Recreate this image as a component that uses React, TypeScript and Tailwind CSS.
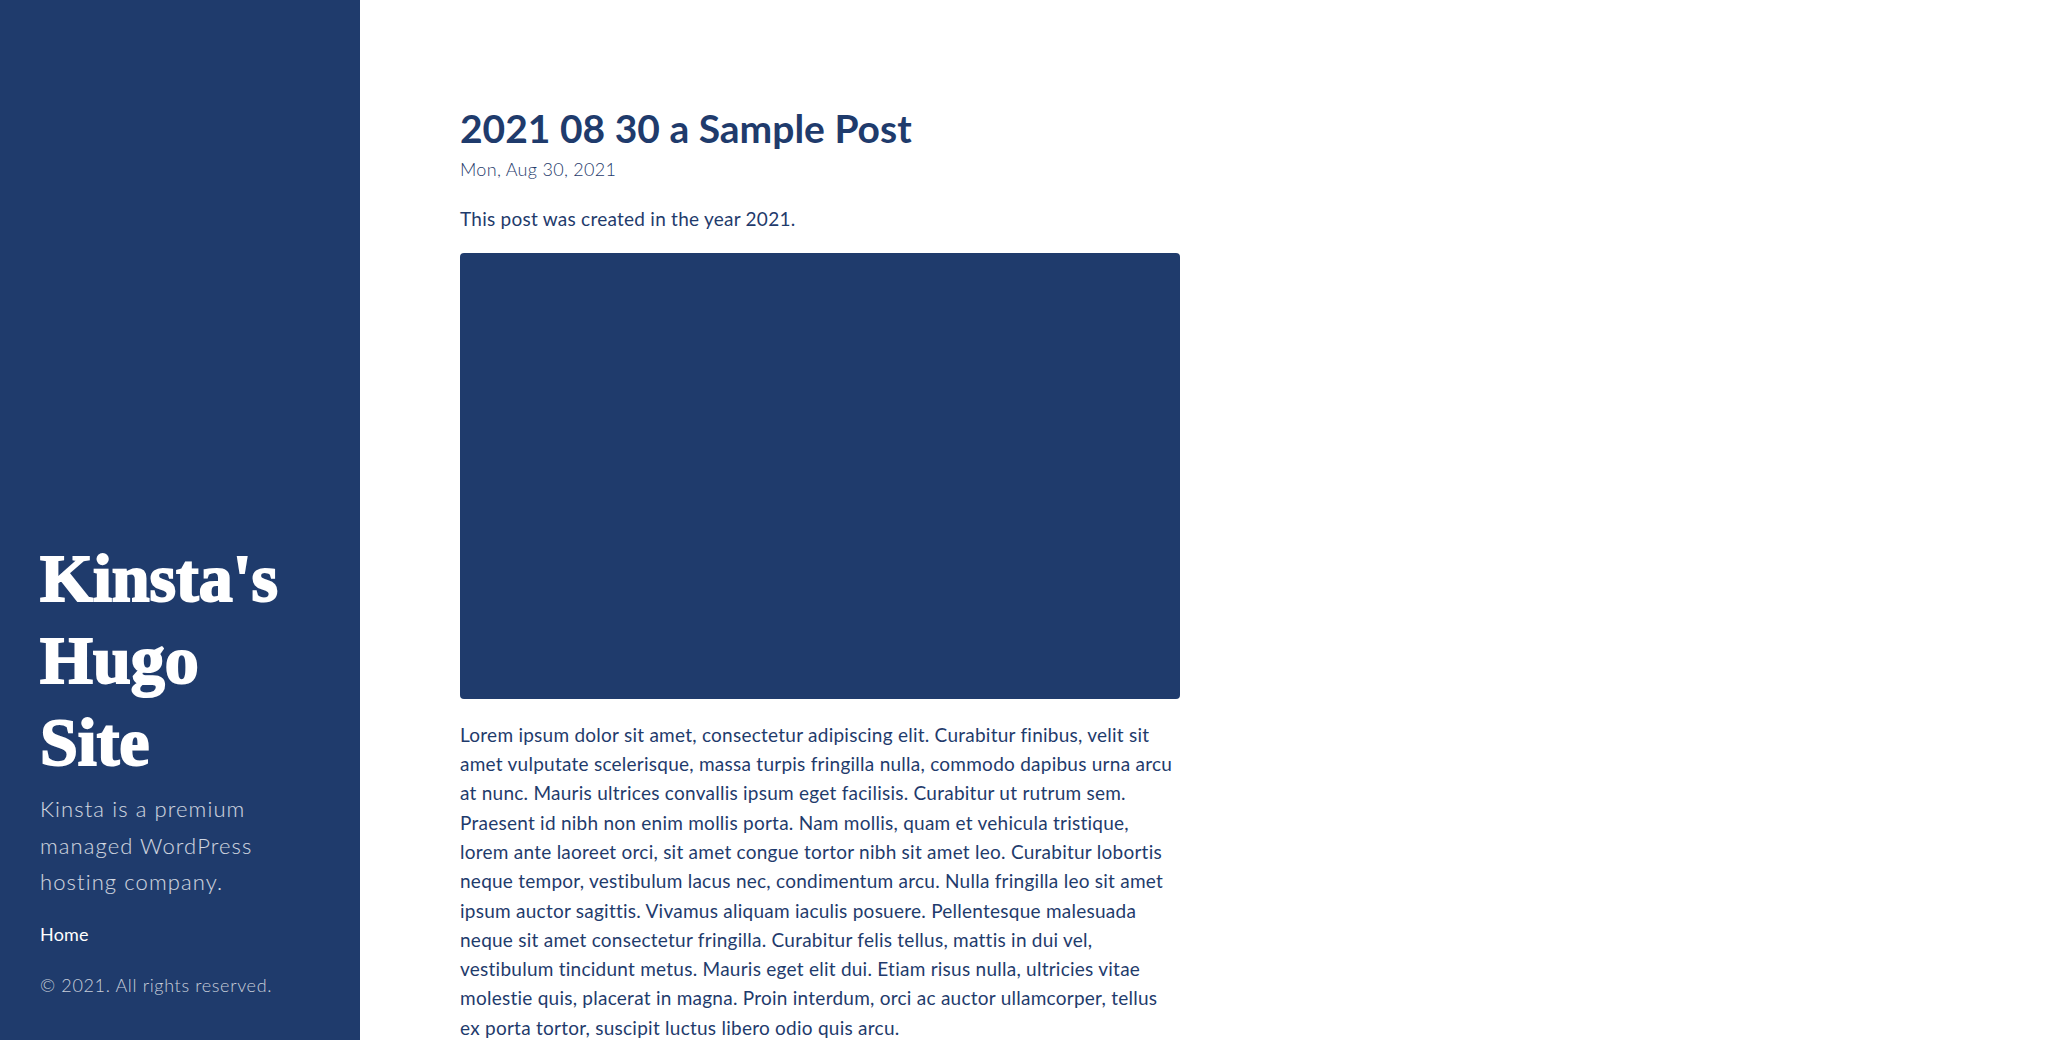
import React from "react";

const bodyLines = [
  "Lorem ipsum dolor sit amet, consectetur adipiscing elit. Curabitur finibus, velit sit",
  "amet vulputate scelerisque, massa turpis fringilla nulla, commodo dapibus urna arcu",
  "at nunc. Mauris ultrices convallis ipsum eget facilisis. Curabitur ut rutrum sem.",
  "Praesent id nibh non enim mollis porta. Nam mollis, quam et vehicula tristique,",
  "lorem ante laoreet orci, sit amet congue tortor nibh sit amet leo. Curabitur lobortis",
  "neque tempor, vestibulum lacus nec, condimentum arcu. Nulla fringilla leo sit amet",
  "ipsum auctor sagittis. Vivamus aliquam iaculis posuere. Pellentesque malesuada",
  "neque sit amet consectetur fringilla. Curabitur felis tellus, mattis in dui vel,",
  "vestibulum tincidunt metus. Mauris eget elit dui. Etiam risus nulla, ultricies vitae",
  "molestie quis, placerat in magna. Proin interdum, orci ac auctor ullamcorper, tellus",
  "ex porta tortor, suscipit luctus libero odio quis arcu.",
];

export default function App() {
  return (
    <div className="flex min-h-screen bg-white font-['Lato',sans-serif]">
      <aside className="sticky top-0 flex h-screen w-[360px] shrink-0 flex-col justify-end bg-[#1f3b6c] pl-[40px] pr-6 pb-[43px]">
        <h1 className="font-['Liberation_Serif','Times_New_Roman',serif] text-[68px] font-bold leading-[82px] text-white [-webkit-text-stroke:2px_white]">
          Kinsta's
          <br />
          Hugo
          <br />
          Site
        </h1>
        <p className="mt-[7.5px] text-[22px] font-light leading-[36.7px] tracking-[1.1px] text-white/80">
          Kinsta is a premium
          <br />
          managed WordPress
          <br />
          hosting company.
        </p>
        <nav className="mt-[21px]">
          <a href="#" className="text-[18px] leading-[24px] tracking-[0.2px] text-white">
            Home
          </a>
        </nav>
        <p className="mt-[26px] text-[18px] font-light leading-[24px] tracking-[0.65px] text-white/75">
          © 2021. All rights reserved.
        </p>
      </aside>
      <main className="flex-1 pl-[100px] pt-[105px] text-[#1f3b6c]">
        <article className="w-[720px]">
          <h2 className="text-[39px] font-bold leading-[1.2]">2021 08 30 a Sample Post</h2>
          <p className="mt-[5px] text-[18px] font-light leading-[24px] tracking-[0.3px]">Mon, Aug 30, 2021</p>
          <p className="mt-[23px] text-[19px] leading-[29px] tracking-[0.25px]">
            This post was created in the year 2021.
          </p>
          <div className="mt-[20.5px] h-[446px] w-[720px] rounded-[4px] bg-[#1f3b6c]" />
          <p className="mt-[20.5px] text-[19px] leading-[29.3px] tracking-[0.25px]">
            {bodyLines.map((l, i) => (
              <span key={i} className="block whitespace-nowrap">
                {l}
              </span>
            ))}
          </p>
        </article>
      </main>
    </div>
  );
}
